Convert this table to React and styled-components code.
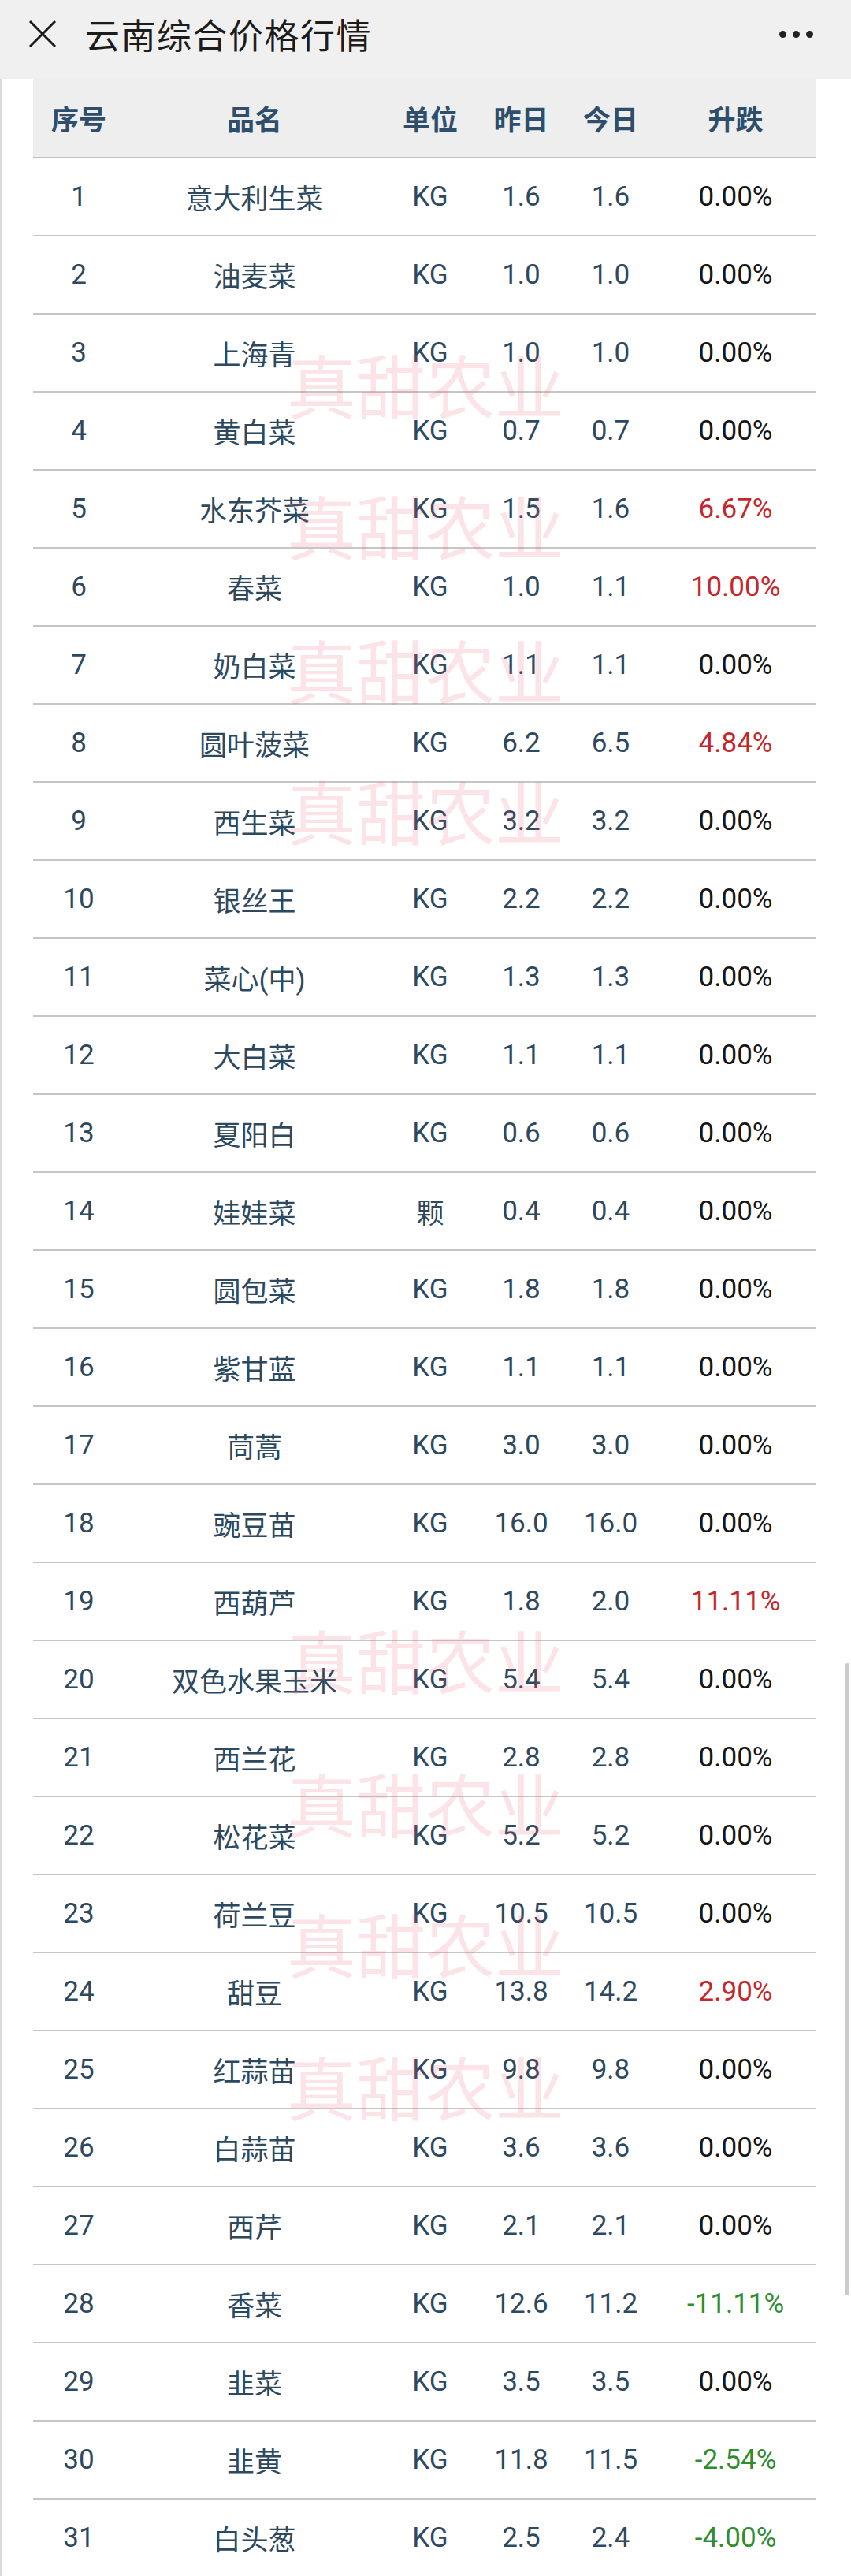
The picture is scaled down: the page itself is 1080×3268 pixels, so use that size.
import React from "react";
import styled, { createGlobalStyle } from "styled-components";

const GlobalStyle = createGlobalStyle`
  html, body {
    margin: 0;
    padding: 0;
    background: #ffffff;
  }
  body {
    font-family: Roboto, "Noto Sans CJK SC", "Noto Sans", sans-serif;
    -webkit-font-smoothing: antialiased;
  }
`;

const Page = styled.div`
  position: relative;
  width: 1080px;
  min-height: 3268px;
  overflow: hidden;
  background: #ffffff;
`;

const TopBar = styled.header`
  height: 100px;
  box-sizing: border-box;
  background: #f0f0f0;
  display: flex;
  align-items: center;
  padding: 0 48px 14px 35px;
`;

const CloseIcon = styled.svg`
  width: 38px;
  height: 38px;
  flex: none;
`;

const Title = styled.h1`
  margin: 0 0 0 35px;
  font-family: "Noto Sans CJK SC", "Noto Sans", sans-serif;
  font-weight: 400;
  font-size: 44px;
  letter-spacing: 1.5px;
  color: #1c1c1c;
  flex: 1;
`;

const Dots = styled.div`
  display: flex;
  gap: 8px;
`;

const Dot = styled.span`
  width: 9px;
  height: 9px;
  border-radius: 50%;
  background: #222;
`;

const Content = styled.main`
  border-left: 3px solid #dadada;
  padding: 0 44px 0 39px;
`;

const Table = styled.div`
  width: 994px;
`;

const COLS = "116px 330px 116px 115px 112px 205px";

const HeadRow = styled.div`
  display: grid;
  grid-template-columns: ${COLS};
  height: 99px;
  background: #eeeeee;
  border-bottom: 2px solid #c1c1c1;
  align-items: center;
`;

const HeadCell = styled.div`
  text-align: center;
  font-family: "Noto Sans CJK SC", sans-serif;
  font-weight: 700;
  font-size: 35px;
  color: #2e4e6b;
`;

const Row = styled.div`
  display: grid;
  grid-template-columns: ${COLS};
  height: 97px;
  border-bottom: 2px solid #c6c6c6;
  align-items: center;
`;

const Cell = styled.div`
  text-align: center;
  font-size: 35px;
  color: #2d4960;
  white-space: nowrap;
`;

const toneColor = {
  flat: "#161616",
  up: "#c5282c",
  down: "#2f8d31",
};

const Change = styled(Cell)`
  color: ${(p) => toneColor[p.$tone]};
`;

const Watermark = styled.div`
  position: absolute;
  left: 0;
  width: 1080px;
  text-align: center;
  font-family: "Noto Sans CJK SC", sans-serif;
  font-size: 88px;
  line-height: 1;
  color: rgba(232, 90, 110, 0.17);
  pointer-events: none;
  transform: translateY(-50%);
`;

const Scrollbar = styled.div`
  position: absolute;
  left: 1073px;
  width: 5px;
  background: #cacaca;
  border-radius: 2px;
`;

const rows = [
  ["1", "意大利生菜", "KG", "1.6", "1.6", "0.00%", "flat"],
  ["2", "油麦菜", "KG", "1.0", "1.0", "0.00%", "flat"],
  ["3", "上海青", "KG", "1.0", "1.0", "0.00%", "flat"],
  ["4", "黄白菜", "KG", "0.7", "0.7", "0.00%", "flat"],
  ["5", "水东芥菜", "KG", "1.5", "1.6", "6.67%", "up"],
  ["6", "春菜", "KG", "1.0", "1.1", "10.00%", "up"],
  ["7", "奶白菜", "KG", "1.1", "1.1", "0.00%", "flat"],
  ["8", "圆叶菠菜", "KG", "6.2", "6.5", "4.84%", "up"],
  ["9", "西生菜", "KG", "3.2", "3.2", "0.00%", "flat"],
  ["10", "银丝王", "KG", "2.2", "2.2", "0.00%", "flat"],
  ["11", "菜心(中)", "KG", "1.3", "1.3", "0.00%", "flat"],
  ["12", "大白菜", "KG", "1.1", "1.1", "0.00%", "flat"],
  ["13", "夏阳白", "KG", "0.6", "0.6", "0.00%", "flat"],
  ["14", "娃娃菜", "颗", "0.4", "0.4", "0.00%", "flat"],
  ["15", "圆包菜", "KG", "1.8", "1.8", "0.00%", "flat"],
  ["16", "紫甘蓝", "KG", "1.1", "1.1", "0.00%", "flat"],
  ["17", "茼蒿", "KG", "3.0", "3.0", "0.00%", "flat"],
  ["18", "豌豆苗", "KG", "16.0", "16.0", "0.00%", "flat"],
  ["19", "西葫芦", "KG", "1.8", "2.0", "11.11%", "up"],
  ["20", "双色水果玉米", "KG", "5.4", "5.4", "0.00%", "flat"],
  ["21", "西兰花", "KG", "2.8", "2.8", "0.00%", "flat"],
  ["22", "松花菜", "KG", "5.2", "5.2", "0.00%", "flat"],
  ["23", "荷兰豆", "KG", "10.5", "10.5", "0.00%", "flat"],
  ["24", "甜豆", "KG", "13.8", "14.2", "2.90%", "up"],
  ["25", "红蒜苗", "KG", "9.8", "9.8", "0.00%", "flat"],
  ["26", "白蒜苗", "KG", "3.6", "3.6", "0.00%", "flat"],
  ["27", "西芹", "KG", "2.1", "2.1", "0.00%", "flat"],
  ["28", "香菜", "KG", "12.6", "11.2", "-11.11%", "down"],
  ["29", "韭菜", "KG", "3.5", "3.5", "0.00%", "flat"],
  ["30", "韭黄", "KG", "11.8", "11.5", "-2.54%", "down"],
  ["31", "白头葱", "KG", "2.5", "2.4", "-4.00%", "down"],
];

const headers = ["序号", "品名", "单位", "昨日", "今日", "升跌"];
const watermarkYs = [486, 665, 848, 1027, 2104, 2286, 2464, 2645];

export default function App() {
  return (
    <Page>
      <GlobalStyle />
      <TopBar>
        <CloseIcon viewBox="0 0 38 38">
          <path d="M3 3 L35 35 M35 3 L3 35" stroke="#1a1a1a" strokeWidth="3" fill="none" />
        </CloseIcon>
        <Title>云南综合价格行情</Title>
        <Dots>
          <Dot />
          <Dot />
          <Dot />
        </Dots>
      </TopBar>
      <Content>
        <Table>
          <HeadRow>
            {headers.map((h) => (
              <HeadCell key={h}>{h}</HeadCell>
            ))}
          </HeadRow>
          {rows.map(([no, name, unit, y, t, pct, tone]) => (
            <Row key={no}>
              <Cell>{no}</Cell>
              <Cell>{name}</Cell>
              <Cell>{unit}</Cell>
              <Cell>{y}</Cell>
              <Cell>{t}</Cell>
              <Change $tone={tone}>{pct}</Change>
            </Row>
          ))}
        </Table>
      </Content>
      {watermarkYs.map((y) => (
        <Watermark key={y} style={{ top: y }}>
          真甜农业
        </Watermark>
      ))}
      <Scrollbar style={{ top: 2110, height: 802 }} />
    </Page>
  );
}
